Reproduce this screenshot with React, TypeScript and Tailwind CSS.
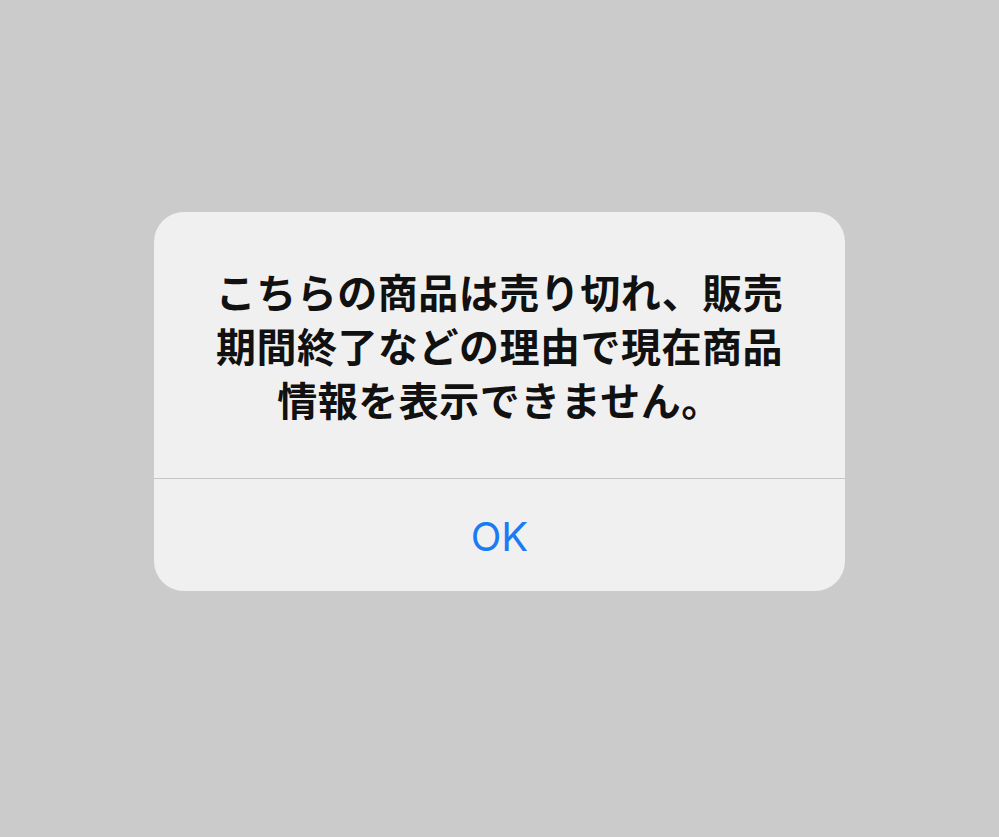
export default function App() {
    return (
        <div className="min-h-[837px] w-full bg-[#cbcbcb] flex justify-center pt-[212px]">
            <div className="w-[691px] h-[379px] bg-[#f0f0f0] rounded-[30px] flex flex-col overflow-hidden">
                <div className="h-[266px] flex items-center justify-center px-10">
                    <p
                        className="text-center text-[40px] leading-[54px] font-bold text-[#111111] tracking-[0.5px]"
                        style={{ fontFamily: '"Noto Sans CJK JP", "Noto Sans", sans-serif' }}
                    >
                        こちらの商品は売り切れ、販売
                        <br />
                        期間終了などの理由で現在商品
                        <br />
                        情報を表示できません。
                    </p>
                </div>
                <div className="h-px bg-[#c6c6c6]" />
                <button
                    className="flex-1 flex items-center justify-center text-[40px] text-[#1a7cf5] pt-[3px]"
                    style={{ fontFamily: 'Inter, "Liberation Sans", sans-serif' }}
                >
                    OK
                </button>
            </div>
        </div>
    );
}
